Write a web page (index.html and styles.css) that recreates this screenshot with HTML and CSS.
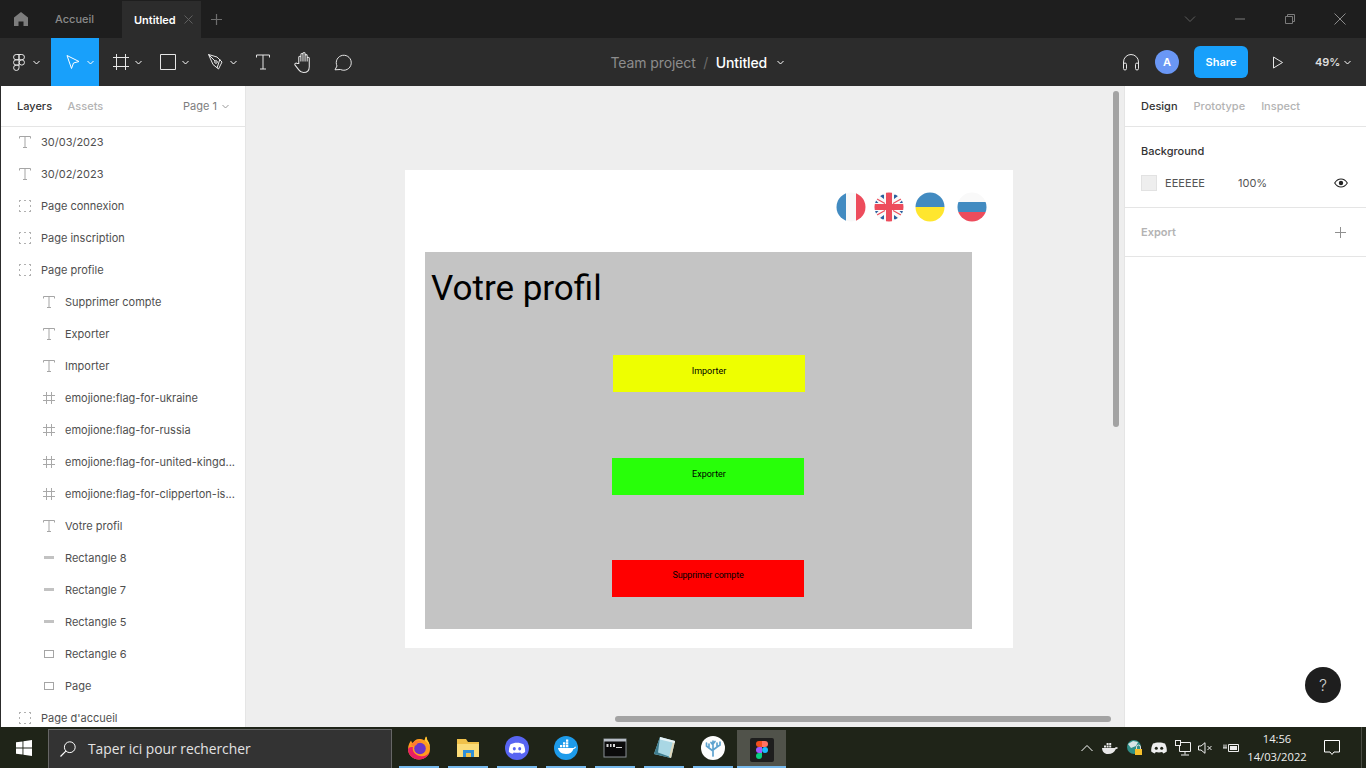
FILE: index.html
```html
<!DOCTYPE html>
<html lang="fr">
<head>
<meta charset="utf-8">
<title>Untitled – Figma</title>
<link rel="stylesheet" href="styles.css">
</head>
<body>
<div class="app">
  <header class="titlebar">
    <svg class="home" viewBox="0 0 14 14"><path d="M7 0 0 5.500V14h4.500V9.500h5V14H14V5.500z" fill="#7d7d7d"/></svg>
    <span class="tab-inactive">Accueil</span>
    <div class="tab-active"><span class="tab-name">Untitled</span>
      <svg class="tab-x" viewBox="0 0 9 9"><path d="M.5.500l8 8M8.500.500l-8 8" stroke="#5f5f5f" fill="none"/></svg>
    </div>
    <svg class="tab-plus" viewBox="0 0 11 11"><path d="M5.500 0v11M0 5.500h11" stroke="#6e6e6e" stroke-width="1.200" fill="none"/></svg>
    <div class="win-controls">
      <svg class="win-btn" viewBox="0 0 12 12"><path d="M1 3.500l5 5 5-5" stroke="#5e5e5e" fill="none"/></svg>
      <svg class="win-btn" viewBox="0 0 12 12"><path d="M1 6h10" stroke="#7b7b7b" fill="none"/></svg>
      <svg class="win-btn" viewBox="0 0 12 12"><path d="M1.500 3.500h7v7h-7zM3.500 3.500v-2h7v7h-2" stroke="#7b7b7b" fill="none"/></svg>
      <svg class="win-btn" viewBox="0 0 12 12"><path d="M.5.500l11 11M11.500.500l-11 11" stroke="#8b8b8b" fill="none"/></svg>
    </div>
  </header>

  <nav class="toolbar">
    <div class="tools">
      <div class="tool tool-logo">
        <svg class="ic-logo" viewBox="0 0 12 17"><path d="M6 .5H3.200a2.650 2.650 0 0 0 0 5.300H6zM6 .5h2.800a2.650 2.650 0 0 1 0 5.300H6zM6 5.800H3.200a2.650 2.650 0 0 0 0 5.300H6zM8.800 5.800a2.650 2.650 0 1 1 0 5.300 2.650 2.650 0 0 1 0-5.300zM6 11.100H3.200A2.700 2.700 0 1 0 6 13.800z" stroke="#e6e6e6" fill="none"/></svg>
        <svg class="chev" viewBox="0 0 7 5"><path d="M.5 1 3.500 4 6.500 1" stroke="#fff" fill="none"/></svg>
      </div>
      <div class="tool tool-move">
        <svg class="ic16" viewBox="0 0 16 16"><path d="M2 1.500 14 7.500 8.500 9 6.500 14.500z" stroke="#fff" fill="none"/></svg>
        <svg class="chev" viewBox="0 0 7 5"><path d="M.5 1 3.500 4 6.500 1" stroke="#fff" fill="none"/></svg>
      </div>
      <div class="tool tool-frame">
        <svg class="ic16" viewBox="0 0 16 16"><path d="M3.500 0v16M12.500 0v16M0 3.500h16M0 12.500h16" stroke="#e6e6e6" fill="none"/></svg>
        <svg class="chev" viewBox="0 0 7 5"><path d="M.5 1 3.500 4 6.500 1" stroke="#fff" fill="none"/></svg>
      </div>
      <div class="tool tool-rect">
        <svg class="ic16" viewBox="0 0 16 16"><path d="M.5.500h15v15H.500z" stroke="#e6e6e6" fill="none"/></svg>
        <svg class="chev" viewBox="0 0 7 5"><path d="M.5 1 3.500 4 6.500 1" stroke="#fff" fill="none"/></svg>
      </div>
      <div class="tool tool-pen">
        <svg class="ic16" viewBox="0 0 16 16"><path d="M.5.500 9 3l5 5-3.500 7-5.500-4.500zM.5.500 7 7M12 5l-3 9" stroke="#e6e6e6" fill="none"/><circle cx="8" cy="8" r="1.300" stroke="#e6e6e6" fill="none"/></svg>
        <svg class="chev" viewBox="0 0 7 5"><path d="M.5 1 3.500 4 6.500 1" stroke="#fff" fill="none"/></svg>
      </div>
      <div class="tool tool-text">
        <svg class="ic16" viewBox="0 0 16 16"><path d="M1.500 3.500v-2.500h13v2.500M8 1v14M5 15h6" stroke="#e6e6e6" fill="none"/></svg>
      </div>
      <div class="tool tool-hand">
        <svg class="ic-hand" viewBox="0 0 18 20"><path d="M4.500 11V5a1 1 0 0 1 2 0v4V2.500a1 1 0 0 1 2 0V9V1.500a1 1 0 0 1 2 0V9V3.500a1 1 0 0 1 2 0V9V6a1 1 0 0 1 2 0v8c0 3.500-2 5.500-5.500 5.500-2.500 0-3.500-1-4.500-2.500L1 12.500c-1-1.500 1-2.500 2-1.500z" stroke="#e6e6e6" fill="none"/></svg>
      </div>
      <div class="tool tool-comment">
        <svg class="ic-comment" viewBox="0 0 18 17"><path d="M1 15.800 3 12A7.500 7.500 0 1 1 6.500 15.500z" stroke="#e6e6e6" fill="none" stroke-linejoin="round"/></svg>
      </div>
    </div>
    <div class="crumbs">
      <span class="crumb-team">Team project</span>
      <span class="crumb-sep">/</span>
      <span class="crumb-file">Untitled</span>
      <svg class="chev" viewBox="0 0 7 5"><path d="M.5 1 3.500 4 6.500 1" stroke="#fff" fill="none"/></svg>
    </div>
    <div class="tb-right">
      <svg class="headphones" viewBox="0 0 18 18"><path d="M1.500 13V9a7.500 7.500 0 0 1 15 0v4M1.500 11.500a1.500 1.500 0 0 1 3 0v4a1.500 1.500 0 0 1-3 0zM13.500 11.500a1.500 1.500 0 0 1 3 0v4a1.500 1.500 0 0 1-3 0z" stroke="#e6e6e6" fill="none"/></svg>
      <div class="avatar">A</div>
      <button class="share">Share</button>
      <svg class="play" viewBox="0 0 10 13"><path d="M.5 1v11L9.500 6.500z" stroke="#e6e6e6" fill="none"/></svg>
      <span class="zoom">49%</span>
      <svg class="chev" viewBox="0 0 7 5"><path d="M.5 1 3.500 4 6.500 1" stroke="#fff" fill="none"/></svg>
    </div>
  </nav>

  <main class="workspace">
    <aside class="left-panel">
      <div class="panel-tabs">
        <span class="ptab ptab-on">Layers</span>
        <span class="ptab">Assets</span>
        <span class="page-pick">Page 1
          <svg class="chev" viewBox="0 0 7 5"><path d="M.5 1 3.500 4 6.500 1" stroke="#999" fill="none"/></svg>
        </span>
      </div>
      <ul class="layers">
        <li class="layer"><svg class="li" viewBox="0 0 12 12"><use href="#i-t"/></svg><span class="ln mono">30/03/2023</span></li>
        <li class="layer"><svg class="li" viewBox="0 0 12 12"><use href="#i-t"/></svg><span class="ln mono">30/02/2023</span></li>
        <li class="layer"><svg class="li" viewBox="0 0 12 12"><use href="#i-d"/></svg><span class="ln">Page connexion</span></li>
        <li class="layer"><svg class="li" viewBox="0 0 12 12"><use href="#i-d"/></svg><span class="ln">Page inscription</span></li>
        <li class="layer"><svg class="li" viewBox="0 0 12 12"><use href="#i-d"/></svg><span class="ln">Page profile</span></li>
        <li class="layer sub"><svg class="li" viewBox="0 0 12 12"><use href="#i-t"/></svg><span class="ln">Supprimer compte</span></li>
        <li class="layer sub"><svg class="li" viewBox="0 0 12 12"><use href="#i-t"/></svg><span class="ln">Exporter</span></li>
        <li class="layer sub"><svg class="li" viewBox="0 0 12 12"><use href="#i-t"/></svg><span class="ln">Importer</span></li>
        <li class="layer sub"><svg class="li" viewBox="0 0 12 12"><use href="#i-f"/></svg><span class="ln">emojione:flag-for-ukraine</span></li>
        <li class="layer sub"><svg class="li" viewBox="0 0 12 12"><use href="#i-f"/></svg><span class="ln">emojione:flag-for-russia</span></li>
        <li class="layer sub"><svg class="li" viewBox="0 0 12 12"><use href="#i-f"/></svg><span class="ln">emojione:flag-for-united-kingd...</span></li>
        <li class="layer sub"><svg class="li" viewBox="0 0 12 12"><use href="#i-f"/></svg><span class="ln">emojione:flag-for-clipperton-is...</span></li>
        <li class="layer sub"><svg class="li" viewBox="0 0 12 12"><use href="#i-t"/></svg><span class="ln">Votre profil</span></li>
        <li class="layer sub"><svg class="li" viewBox="0 0 12 12"><use href="#i-l"/></svg><span class="ln">Rectangle 8</span></li>
        <li class="layer sub"><svg class="li" viewBox="0 0 12 12"><use href="#i-l"/></svg><span class="ln">Rectangle 7</span></li>
        <li class="layer sub"><svg class="li" viewBox="0 0 12 12"><use href="#i-l"/></svg><span class="ln">Rectangle 5</span></li>
        <li class="layer sub"><svg class="li" viewBox="0 0 12 12"><use href="#i-r"/></svg><span class="ln">Rectangle 6</span></li>
        <li class="layer sub"><svg class="li" viewBox="0 0 12 12"><use href="#i-r"/></svg><span class="ln">Page</span></li>
        <li class="layer"><svg class="li" viewBox="0 0 12 12"><use href="#i-d"/></svg><span class="ln">Page d'accueil</span></li>
      </ul>
    </aside>

    <section class="canvas">
      <div class="artboard">
        <svg class="flag flag-fr" viewBox="0 0 30 30"><defs><clipPath id="c"><circle cx="15" cy="15" r="14.500"/></clipPath></defs><g clip-path="url(#c)"><rect width="10" height="30" fill="#428bc1"/><rect x="10" width="10" height="30" fill="#f9f9f9"/><rect x="20" width="10" height="30" fill="#ed4c5c"/></g></svg>
        <svg class="flag flag-uk" viewBox="0 0 30 30"><g clip-path="url(#c)"><rect width="30" height="30" fill="#f9f9f9"/><path d="M9 2.500 6 4l4 3V3zM21 2.500 24 4l-4 3V3zM9 27.500 6 26l4-3v4zM21 27.500 24 26l-4-3v4zM1.500 8 4.500 11H1zM28.500 8 25.500 11H29zM1.500 22 4.500 19H1zM28.500 22 25.500 19H29z" fill="#2a5f9e"/><path d="M3 7l8 4.500M27 7l-8 4.500M3 23l8-4.500M27 23l-8-4.500" stroke="#ed4c5c" stroke-width="1.200"/><path d="M12 0h6v30h-6zM0 12h30v6H0z" fill="#ed4c5c"/></g></svg>
        <svg class="flag flag-ua" viewBox="0 0 30 30"><g clip-path="url(#c)"><rect width="30" height="15" fill="#428bc1"/><rect y="15" width="30" height="15" fill="#ffe62e"/></g></svg>
        <svg class="flag flag-ru" viewBox="0 0 30 30"><g clip-path="url(#c)"><rect width="30" height="10" fill="#f9f9f9"/><rect y="10" width="30" height="10" fill="#428bc1"/><rect y="20" width="30" height="10" fill="#ed4c5c"/></g></svg>
        <div class="profile">
          <h1 class="profile-title">Votre profil</h1>
          <div class="act act-import">Importer</div>
          <div class="act act-export">Exporter</div>
          <div class="act act-delete">Supprimer compte</div>
        </div>
      </div>
      <div class="vscroll"></div>
      <div class="hscroll"></div>
    </section>

    <aside class="right-panel">
      <div class="panel-tabs rtabs">
        <span class="ptab ptab-on">Design</span>
        <span class="ptab">Prototype</span>
        <span class="ptab">Inspect</span>
      </div>
      <div class="section section-bg">
        <div class="sec-title">Background</div>
        <div class="bg-row">
          <span class="swatch"></span>
          <span class="hex">EEEEEE</span>
          <span class="pct">100%</span>
          <svg class="eye" viewBox="0 0 14 10"><path d="M.7 5C2.500 2 4.500 1 7 1s4.500 1 6.300 4C11.500 8 9.500 9 7 9S2.500 8 .7 5z" stroke="#222" fill="none" stroke-width="1.100"/><circle cx="7" cy="5" r="2.200" fill="#222"/></svg>
        </div>
      </div>
      <div class="section section-export">
        <span class="sec-muted">Export</span>
        <svg class="plus" viewBox="0 0 11 11"><path d="M5.500 0v11M0 5.500h11" stroke="#8f8f8f" fill="none"/></svg>
      </div>
      <div class="help">?</div>
    </aside>
  </main>

  <footer class="taskbar">
    <svg class="start" viewBox="0 0 16 16"><path d="M0 2.300 6.500 1.400v6.100H0zM7.400 1.300 16 0v7.500H7.400zM0 8.400h6.500v6.200L0 13.700zM7.400 8.400H16V16l-8.600-1.200z" fill="#fff"/></svg>
    <div class="search">
      <svg class="mag" viewBox="0 0 16 16"><circle cx="9.800" cy="6.200" r="5.400" stroke="#fff" fill="none"/><path d="M5.800 10.200.5 15.500" stroke="#fff" fill="none" stroke-width="1.200"/></svg>
      <span class="search-text">Taper ici pour rechercher</span>
    </div>
    <div class="apps">
      <div class="app-btn">
        <svg class="app-ic" viewBox="0 0 24 24"><path d="M12 3c2 0 4 .4 5.500 1.500C18 3 18.500 1.500 19 .5c1 1 .8 2.500 1.500 4C22.500 7 23 10 23 13c0 6-5 10.500-11 10.500S1 19 1 13C1 9 3 6 4 4.500 5 7 5.500 7 6 7c1-2 3-4 6-4z" fill="#ff9a1f"/><path d="M1 13c0 6 5 10.500 11 10.500 5 0 9-3 10.500-7-2 3-6 4.500-9.500 3.500C7 19 5 14 6 11c-2 0-4 0-5 2z" fill="#e81e63"/><circle cx="13" cy="12.500" r="5.800" fill="#6b35c9"/><path d="M4 9c2-4 7-5 11-3.500-3 0-5 1.500-5.500 3.500C7.500 10 5.500 10.500 4 9z" fill="#ff7a2e"/><path d="M19 .5c1 1 .8 2.500 1.500 4 1.500 2 2.300 4.500 2.500 7-1-3-3-5.500-5.500-7C18 3 18.500 1.500 19 .5z" fill="#ffc934"/></svg>
      </div>
      <div class="app-btn">
        <svg class="app-ic" viewBox="0 0 24 24"><path d="M1 3h9l2 3h11v15H1z" fill="#f0c14a"/><path d="M1 8h22v13H1z" fill="#fbdc78"/><rect x="7" y="14" width="11" height="7" fill="#2f8fd8"/><rect x="10" y="17" width="5" height="4" fill="#f0c14a"/></svg>
      </div>
      <div class="app-btn">
        <svg class="app-ic" viewBox="0 0 24 24"><circle cx="12" cy="12" r="12" fill="#5865f2"/><path d="M5.500 8.300C9 6.200 15 6.200 18.500 8.300c1.300 2.600 1.800 5.200 1.600 7.700-1.300 1-2.700 1.500-3.900 1.800l-.9-1.400c-2.200.6-4.400.6-6.600 0l-.9 1.400c-1.200-.3-2.600-.8-3.900-1.800-.2-2.500.3-5.100 1.600-7.700z" fill="#fff"/><ellipse cx="9.300" cy="12.700" rx="1.500" ry="1.700" fill="#5865f2"/><ellipse cx="14.700" cy="12.700" rx="1.500" ry="1.700" fill="#5865f2"/></svg>
      </div>
      <div class="app-btn">
        <svg class="app-ic" viewBox="0 0 24 24"><circle cx="12" cy="12" r="12" fill="#1d9bea"/><path d="M4 12h15c1 0 1.800-.6 2-1.500l1 .5c-.5 1.300-1.500 1.800-2.500 1.900-1 3-3.500 5-7.500 5-5 0-7.500-2.500-8-5.900z" fill="#fff"/><path d="M6 9h2.300v2.300H6zM9 9h2.300v2.300H9zM12 9h2.300v2.300H12zM9 6.200h2.300v2.300H9zM12 6.200h2.300v2.300H12zM12 3.500h2.300v2.300H12z" fill="#fff"/></svg>
      </div>
      <div class="app-btn">
        <svg class="app-ic" viewBox="0 0 24 24"><rect x="1" y="3" width="22" height="18" fill="#0b0b0b" stroke="#8a8f95"/><rect x="1" y="3" width="22" height="2.500" fill="#b8bec6"/><path d="M3.500 8h2v3h-2zM7 8h1.500v3H7zM10 8h2v3h-2zM13 11h6v1h-6z" fill="#d9d9d9"/></svg>
      </div>
      <div class="app-btn">
        <svg class="app-ic" viewBox="0 0 24 24"><path d="M8 1 23 5l-4 17-17-4z" fill="#a9d7e4"/><path d="M8 1 2 18l17 4-2-1.500L6 16.500z" fill="#3e7d8f"/><path d="M21 5l2 0-4 17-2-1z" fill="#dfd7bb"/><path d="M8 1 23 5l-.5 2L8 3.500z" fill="#e8f4f7"/></svg>
      </div>
      <div class="app-btn">
        <svg class="app-ic" viewBox="0 0 24 24"><circle cx="12" cy="12" r="12" fill="#fdfdfd"/><path d="M12 20V10M12 15l-4-3V8M8 12 5.500 10V7M12 14l4-3V7M16 11l3-2V6M12 10V5M12 9 10 6.500M12 8l2-2.500" stroke="#5fa3cf" stroke-width="1.700" fill="none" stroke-linecap="round"/></svg>
      </div>
      <div class="app-btn app-on">
        <svg class="app-ic figma-app" viewBox="0 0 24 24"><rect width="24" height="24" rx="2" fill="#1e1e1e"/><circle cx="15" cy="12" r="3" fill="#1abcfe"/><path d="M12 18a3 3 0 1 1-3-3h3z" fill="#0acf83"/><path d="M12 15H9a3 3 0 0 1 0-6h3z" fill="#a259ff"/><path d="M12 9H9a3 3 0 0 1 0-6h3z" fill="#f24e1e"/><path d="M12 3h3a3 3 0 0 1 0 6h-3z" fill="#ff7262"/></svg>
      </div>
    </div>
    <div class="tray">
      <svg class="tr tr-chev" viewBox="0 0 12 8"><path d="M.5 7 6 1.500 11.500 7" stroke="#fff" fill="none"/></svg>
      <svg class="tr tr-docker" viewBox="0 0 16 12"><path d="M0 6h12c1 0 1.500-.5 2-1l2 .8c-.5 1-1.500 1.400-2.300 1.400C12.500 10 10 12 6 12 2 12 .3 9.500 0 6z" fill="#e8e8e8"/><path d="M2 3.500h2v2H2zM4.600 3.500h2v2h-2zM7.200 3.500h2v2h-2zM4.600 1h2v2h-2zM7.200 1h2v2h-2z" fill="#e8e8e8"/></svg>
      <svg class="tr tr-vpn" viewBox="0 0 16 16"><circle cx="7" cy="7" r="7" fill="#2f8f87"/><path d="M1 4 6 1l5 1-2 4-5 2z" fill="#d8e4e6"/><rect x="8" y="9" width="7" height="6" fill="#f6c02c"/><path d="M9.500 9V7a2 2 0 0 1 4 0v2" stroke="#ddd" fill="none"/></svg>
      <svg class="tr tr-discord" viewBox="0 0 16 12"><path d="M2 1.500C5 0 11 0 14 1.500c1.300 2.500 2 5 1.800 8-1.300 1-2.500 1.500-3.600 2l-1-1.500c-2 .5-4.400.5-6.400 0l-1 1.500c-1.100-.5-2.300-1-3.600-2C0 6.500.7 4 2 1.500z" fill="#eee"/><circle cx="5.300" cy="6.300" r="1.500" fill="#1f2418"/><circle cx="10.700" cy="6.300" r="1.500" fill="#1f2418"/></svg>
      <svg class="tr tr-net" viewBox="0 0 16 16"><path d="M4.500 2.500h11v9h-11zM10 11.500v3M6 15h8" stroke="#eee" fill="none"/><rect x=".5" y=".5" width="5" height="5" stroke="#eee" fill="#1f2418"/></svg>
      <svg class="tr tr-vol" viewBox="0 0 15 12"><path d="M.5 4h2.500L7 .7v10.600L3 8H.5z" stroke="#eee" fill="none"/><path d="M9.500 4l4 4M13.500 4l-4 4" stroke="#eee" fill="none"/></svg>
      <svg class="tr tr-bat" viewBox="0 0 16 12"><path d="M5.500 2.500h10v7h-10z" stroke="#eee" fill="none"/><rect x="7" y="4" width="7" height="4" fill="#eee"/><path d="M0 6h4M1 2.500v3.500M3 2.500v3.500" stroke="#eee" fill="none"/></svg>
      <div class="clock"><span>14:56</span><span>14/03/2022</span></div>
      <svg class="notif" viewBox="0 0 16 16"><path d="M.5 .5h15v11.500h-5.500L8 14.500 6 12H.5z" stroke="#fff" fill="none"/></svg>
    </div>
  </footer>
</div>

<svg class="defs" width="0" height="0">
  <defs>
    <g id="i-t"><path d="M.5 2.500V.5h11v2M6 .5v11M4 11.500h4" stroke="#a5a5a5" fill="none"/></g>
    <g id="i-d"><path d="M0 .5h2M5 .5h2M10 .5h2M0 11.500h2M5 11.500h2M10 11.500h2M.5 0v2M.5 5v2M.5 10v2M11.500 0v2M11.500 5v2M11.500 10v2" stroke="#b0b0b0" fill="none"/></g>
    <g id="i-f"><path d="M3.500 0v12M8.500 0v12M0 3.500h12M0 8.500h12" stroke="#a8a8a8" fill="none"/></g>
    <g id="i-l"><rect x="1" y="4" width="10" height="3" fill="#c2c2c2"/></g>
    <g id="i-r"><rect x="1.500" y="2.500" width="9" height="7" stroke="#a5a5a5" fill="none"/></g>
  </defs>
</svg>
</body>
</html>
```
FILE: styles.css
```css
* { box-sizing: border-box; }
html, body { margin: 0; padding: 0; height: 100%; overflow: hidden; }
body { font-family: Inter, "Liberation Sans", sans-serif; font-size: 11px; color: #333; background: #eee; }
.app { width: 1366px; height: 768px; display: flex; flex-direction: column; }
.defs { position: absolute; }
svg { display: block; flex: none; }

/* title bar */
.titlebar { height: 38px; background: #1e1e1e; display: flex; align-items: center; flex: none; }
.home { width: 14px; height: 14px; margin-left: 14px; }
.tab-inactive { margin-left: 27px; width: 67px; font-size: 11px; font-weight: 500; color: #8a8a8a; }
.tab-active { width: 79px; height: 37px; margin-top: 1px; background: #2c2c2c; display: flex; align-items: center; padding-left: 12px; }
.tab-name { font-size: 11px; font-weight: 600; color: #fff; width: 50px; }
.tab-x { width: 9px; height: 9px; }
.tab-plus { width: 11px; height: 11px; margin-left: 10px; }
.win-controls { margin-left: auto; display: flex; align-items: center; gap: 38px; padding-right: 20px; }
.win-btn { width: 12px; height: 12px; }

/* toolbar */
.toolbar { height: 48px; background: #2c2c2c; display: flex; align-items: center; position: relative; flex: none; }
.tools { display: flex; align-items: center; height: 48px; }
.tool { height: 48px; display: flex; align-items: center; }
.ic16 { width: 16px; height: 16px; }
.ic-logo { width: 12px; height: 17px; }
.chev { width: 7px; height: 5px; }
.tool-logo { width: 51px; padding-left: 13px; gap: 8px; }
.tool-move { width: 48px; background: #18a0fb; padding-left: 14px; gap: 6px; }
.tool-frame { width: 48px; padding-left: 14px; gap: 6px; }
.tool-rect { width: 47px; padding-left: 13px; gap: 6px; }
.tool-pen { width: 47px; padding-left: 14px; gap: 6px; }
.tool-text { width: 40px; padding-left: 14px; }
.tool-hand { width: 40px; padding-left: 13px; }
.ic-hand { width: 19px; height: 21px; }
.ic-comment { width: 18px; height: 17px; }
.tool-comment { padding-left: 13px; }
.crumbs { position: absolute; left: 610.500px; top: 0; height: 48px; display: flex; align-items: center; font-size: 14px; letter-spacing: -.1px; }
.crumb-team { color: #8d8d8d; }
.crumb-sep { color: #6a6a6a; margin: 0 7.500px; }
.crumb-file { color: #fff; font-weight: 500; }
.crumbs .chev { margin-left: 10px; }
.tb-right { margin-left: auto; display: flex; align-items: center; height: 48px; padding-right: 15px; }
.headphones { width: 18px; height: 18px; }
.avatar { width: 24px; height: 24px; margin-left: 15px; border-radius: 50%; background: #6a97f5; color: #fff; font-size: 11px; font-weight: 600; display: flex; align-items: center; justify-content: center; }
.share { width: 54px; height: 32px; margin-left: 15px; border: 0; padding: 0; border-radius: 6px; background: #18a0fb; color: #fff; font: 600 11px Inter, sans-serif; }
.play { width: 10px; height: 13px; margin-left: 25px; }
.zoom { margin-left: 32px; width: 27px; color: #ddd; font-size: 11px; font-weight: 600; }
.tb-right .chev { margin-left: 2px; }

/* workspace */
.workspace { flex: 1; min-height: 0; display: flex; overflow: hidden; }
.left-panel { width: 246px; flex: none; background: #fff; border-left: 1px solid #2c2c2c; border-right: 1px solid #e5e5e5; overflow: hidden; }
.panel-tabs { height: 41px; border-bottom: 1px solid #e5e5e5; display: flex; align-items: center; padding-left: 16px; gap: 15.500px; }
.rtabs { gap: 16px; }
.ptab { font-size: 11px; font-weight: 500; color: #b3b3b3; }
.ptab-on { color: #333; }
.page-pick { margin-left: auto; margin-right: 16px; display: flex; align-items: center; gap: 5px; font-weight: 400; color: #7d7d7d; font-size: 11px; }
.layers { list-style: none; margin: 0; padding: 0; }
.layer { height: 32px; display: flex; align-items: center; padding: 0 0 2px 18px; color: #4f4f4f; }
.layer.sub { padding-left: 42px; }
.li { width: 12px; height: 12px; }
.ln { margin-left: 10px; font-size: 11px; white-space: nowrap; }
.mono { letter-spacing: 0; }

/* canvas */
.canvas { flex: 1; position: relative; background: #eee; }
.artboard { position: absolute; left: 159px; top: 84px; width: 608px; height: 478px; background: #fff; }
.flag { position: absolute; top: 22px; width: 30px; height: 30px; }
.flag-fr { left: 431px; }
.flag-uk { left: 469px; }
.flag-ua { left: 510px; }
.flag-ru { left: 552px; }
.profile { position: absolute; left: 20px; top: 82px; width: 547px; height: 377px; background: #c4c4c4; }
.profile-title { position: absolute; left: 6px; top: 16px; margin: 0; font: 400 35px/42px Roboto, sans-serif; color: #000; white-space: nowrap; }
.act { position: absolute; height: 37px; width: 192px; font: 400 9px/11px Roboto, sans-serif; color: #000; text-align: center; padding-top: 10px; }
.act-import { left: 188px; top: 103px; background: #eeff00; padding-top: 11px; }
.act-export { left: 187px; top: 206px; background: #28ff09; padding: 11px 0 0 2px; }
.act-delete { left: 187px; top: 308px; background: #ff0000; letter-spacing: -.2px; }
.vscroll { position: absolute; left: 867px; top: 5px; width: 6px; height: 336px; border-radius: 3px; background: #a3a3a3; }
.hscroll { position: absolute; left: 369px; top: 630px; width: 496px; height: 6px; border-radius: 3px; background: #a3a3a3; }

/* right panel */
.right-panel { width: 242px; flex: none; background: #fff; border-left: 1px solid #e5e5e5; position: relative; }
.section { border-bottom: 1px solid #e5e5e5; padding: 0 16px; }
.section-bg { height: 81px; }
.sec-title { font-size: 11px; font-weight: 500; color: #333; padding-top: 17px; line-height: 14px; }
.bg-row { display: flex; align-items: center; margin-top: 13px; height: 24px; }
.swatch { width: 16px; height: 16px; background: #eee; border: 1px solid #e2e2e2; }
.hex { margin-left: 8px; width: 73px; color: #555; letter-spacing: .05px; }
.pct { color: #555; }
.eye { width: 14px; height: 10px; margin-left: auto; margin-right: 2px; }
.section-export { height: 49px; display: flex; align-items: center; justify-content: space-between; }
.sec-muted { font-size: 11px; font-weight: 600; color: #b3b3b3; }
.plus { width: 11px; height: 11px; margin-right: 4px; }
.help { position: absolute; left: 180px; top: 581px; width: 36px; height: 36px; border-radius: 50%; background: #1e1e1e; color: #ccc; font-size: 16px; font-weight: 300; display: flex; align-items: center; justify-content: center; }

/* taskbar */
.taskbar { height: 41px; flex: none; background: #1f2418; display: flex; align-items: stretch; font-family: "Open Sans", "Noto Sans", sans-serif; color: #fff; }
.start { width: 16px; height: 16px; margin: 13px 16px 0 16px; }
.search { width: 344px; height: 39px; margin-top: 2px; background: #333; border: 1px solid #666; border-bottom: 0; display: flex; align-items: center; padding-left: 11px; }
.mag { width: 16px; height: 16px; }
.search-text { margin: 0 0 2px 12px; font-size: 13.800px; color: #e3e3e3; }
.apps { display: flex; margin-left: 2px; }
.app-btn { width: 49px; height: 41px; display: flex; align-items: center; justify-content: center; position: relative; padding-top: 1px; }
.app-btn::after { content: ""; position: absolute; left: 4.500px; right: 4.500px; bottom: 0; height: 2px; background: #76b9ed; }
.app-on { background: #50524a; height: 38px; margin-top: 3px; }
.app-on::after { left: 0; right: 0; }
.app-ic { width: 24px; height: 24px; }
.tray { flex: 1; position: relative; display: flex; align-items: center; border-right: 1px solid #4a4d44; margin-right: 4px; }
.tr { flex: none; }
.tr-chev { width: 12px; height: 8px; margin-left: 295px; }
.tr-docker { width: 16px; height: 12px; margin-left: 9px; }
.tr-vpn { width: 16px; height: 16px; margin-left: 9px; }
.tr-discord { width: 16px; height: 12px; margin-left: 8px; }
.tr-net { width: 16px; height: 16px; margin-left: 8px; }
.tr-vol { width: 15px; height: 12px; margin-left: 7px; }
.tr-bat { width: 16px; height: 12px; margin-left: 10px; }
.clock { margin-left: 8px; width: 60px; text-align: center; display: flex; flex-direction: column; font-size: 11.200px; line-height: 18px; color: #eee; }
.notif { width: 16px; height: 16px; margin-left: 17px; }
```
